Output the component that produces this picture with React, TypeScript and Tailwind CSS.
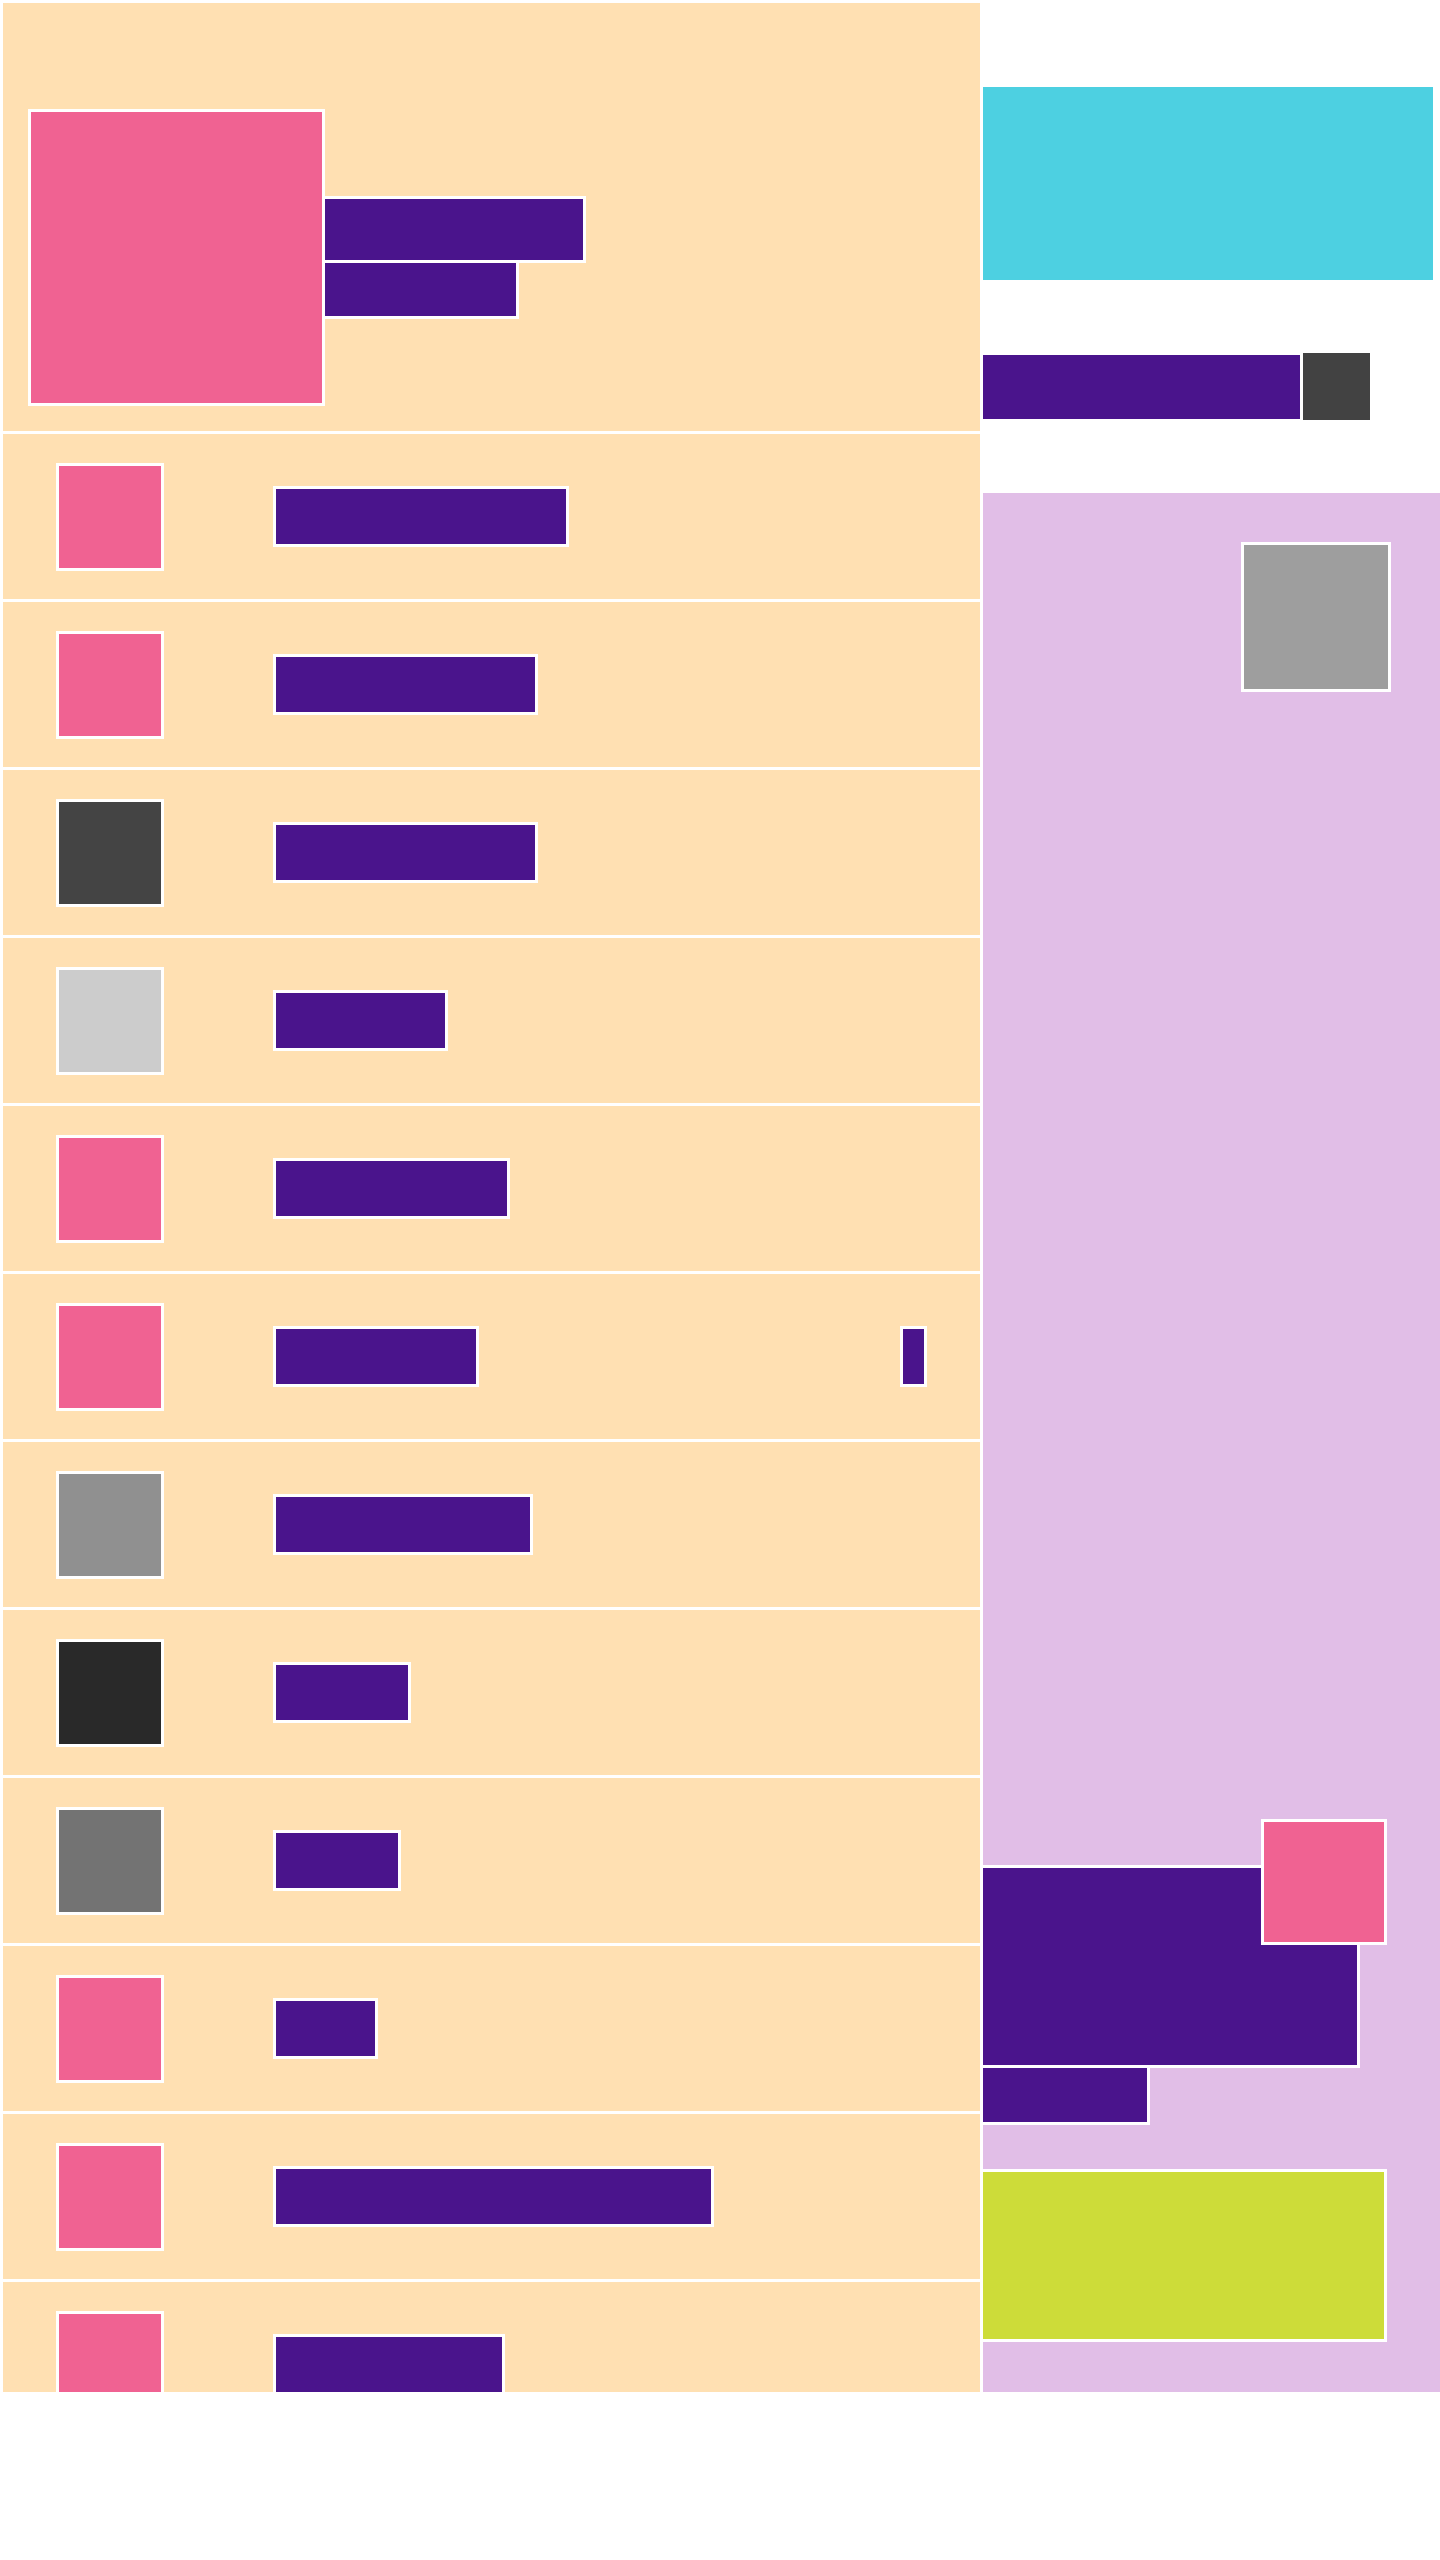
import React from "react";

type Row = { color: string; bar: number; extra?: boolean };

const rows: Row[] = [
  { color: "bg-[#f06292]", bar: 296 },
  { color: "bg-[#f06292]", bar: 265 },
  { color: "bg-[#444444]", bar: 265 },
  { color: "bg-[#cccccc]", bar: 175 },
  { color: "bg-[#f06292]", bar: 237 },
  { color: "bg-[#f06292]", bar: 206, extra: true },
  { color: "bg-[#909090]", bar: 260 },
  { color: "bg-[#292929]", bar: 138 },
  { color: "bg-[#737373]", bar: 128 },
  { color: "bg-[#f06292]", bar: 105 },
  { color: "bg-[#f06292]", bar: 441 },
  { color: "bg-[#f06292]", bar: 232 },
];

function ListRow({ row }: { row: Row }) {
  return (
    <div className="flex h-[165px] shrink-0 items-center justify-between bg-[#ffe0b2] px-[53px]">
      <div className="flex items-center">
        <div className={`h-[108px] w-[108px] shrink-0 border-[3px] border-white ${row.color}`} />
        <div
          className="ml-[109px] h-[61px] border-[3px] border-white bg-[#4a148c]"
          style={{ width: row.bar }}
        />
      </div>
      {row.extra && <div className="h-[61px] w-[27px] border-[3px] border-white bg-[#4a148c]" />}
    </div>
  );
}

export default function App() {
  return (
    <div
      className="h-[2560px] w-[1440px] overflow-hidden bg-white pl-[3px] pt-[3px]"
      style={{ fontFamily: '"Liberation Sans", sans-serif' }}
    >
      <div className="flex h-[2389px] gap-[3px]">
        {/* Left panel */}
        <div className="flex h-[2389px] w-[977px] shrink-0 flex-col gap-[3px] overflow-hidden">
          <div className="flex h-[428px] shrink-0 bg-[#ffe0b2] pl-[25px] pt-[106px]">
            <div className="h-[297px] w-[297px] shrink-0 border-[3px] border-white bg-[#f06292]" />
            <div className="-ml-[3px] flex flex-col justify-center pb-[25px]">
              <div className="h-[67px] w-[264px] border-[3px] border-white bg-[#4a148c]" />
              <div className="h-[56px] w-[197px] border-[3px] border-t-0 border-white bg-[#4a148c]" />
            </div>
          </div>
          {rows.map((r, i) => (
            <ListRow key={i} row={r} />
          ))}
        </div>

        {/* Right column */}
        <div className="flex flex-1 flex-col">
          <div className="-ml-[3px] mt-[81px] h-[199px] w-[456px] border-[3px] border-white bg-[#4dd0e1]" />
          <div className="-ml-[3px] mt-[67px] flex h-[73px] items-center">
            <div className="h-[70px] w-[323px] border-[3px] border-white bg-[#4a148c]" />
            <div className="-ml-[3px] h-[73px] w-[73px] border-[3px] border-white bg-[#424242]" />
          </div>
          <div className="mt-[70px] flex flex-1 flex-col bg-[#e1bee7]">
            <div className="mr-[49px] mt-[49px] h-[150px] w-[150px] self-end border-[3px] border-white bg-[#9e9e9e]" />
            <div className="-ml-[3px] mt-auto flex flex-col">
              <div className="relative h-[203px] w-[380px] border-[3px] border-white bg-[#4a148c]">
                <div className="absolute left-[278px] top-[-49px] h-[126px] w-[126px] border-[3px] border-white bg-[#f06292]" />
              </div>
              <div className="h-[57px] w-[170px] border-[3px] border-t-0 border-white bg-[#4a148c]" />
              <div className="mt-[44px] h-[173px] w-[407px] border-[3px] border-white bg-[#cddc39]" />
              <div className="h-[50px]" />
            </div>
          </div>
        </div>
      </div>
    </div>
  );
}
